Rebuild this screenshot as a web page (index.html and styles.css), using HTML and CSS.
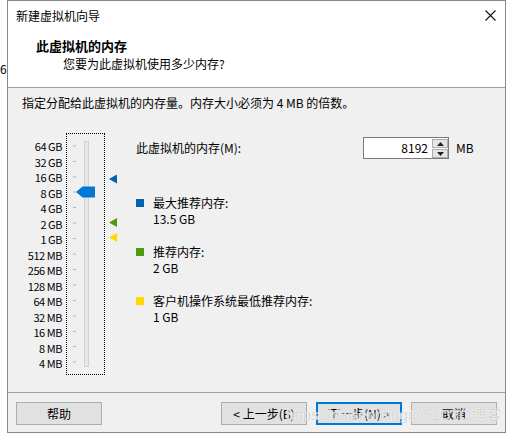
FILE: index.html
```html
<!DOCTYPE html>
<html lang="zh-CN">
<head>
<meta charset="utf-8">
<title>新建虚拟机向导</title>
<link rel="stylesheet" href="styles.css">
</head>
<body>
<div class="stray">6</div>
<div class="window">
  <div class="header">
    <div class="titlebar">
      <span class="title">新建虚拟机向导</span>
      <svg class="close" width="11" height="11" viewBox="0 0 11 11"><path d="M0.5 0.5L10.5 10.5M10.5 0.5L0.5 10.5" stroke="#111" stroke-width="1.1" fill="none"/></svg>
    </div>
    <div class="heading">此虚拟机的内存</div>
    <div class="subheading">您要为此虚拟机使用多少内存?</div>
  </div>
  <div class="body">
    <div class="intro">指定分配给此虚拟机的内存量。内存大小必须为 4 MB 的倍数。</div>
    <div class="main">
      <div class="scale">
        <span>64 GB</span><span>32 GB</span><span>16 GB</span><span>8 GB</span><span>4 GB</span>
        <span>2 GB</span><span>1 GB</span><span>512 MB</span><span>256 MB</span><span>128 MB</span>
        <span>64 MB</span><span>32 MB</span><span>16 MB</span><span>8 MB</span><span>4 MB</span>
      </div>
      <div class="slider">
        <svg width="37" height="240" viewBox="0 0 37 240">
          <g fill="#b4b4b4">
            <rect x="6" y="11.5" width="3" height="1"/>
            <rect x="6" y="27" width="3" height="1"/>
            <rect x="6" y="42.5" width="3" height="1"/>
            <rect x="6" y="57.5" width="3" height="1"/>
            <rect x="6" y="73" width="3" height="1"/>
            <rect x="6" y="88.5" width="3" height="1"/>
            <rect x="6" y="104" width="3" height="1"/>
            <rect x="6" y="119.5" width="3" height="1"/>
            <rect x="6" y="135" width="3" height="1"/>
            <rect x="6" y="150.5" width="3" height="1"/>
            <rect x="6" y="166" width="3" height="1"/>
            <rect x="6" y="181.5" width="3" height="1"/>
            <rect x="6" y="197" width="3" height="1"/>
            <rect x="6" y="212" width="3" height="1"/>
            <rect x="6" y="227.5" width="3" height="1"/>
          </g>
          <rect x="17.5" y="7.5" width="4" height="225" fill="#e7e7e7" stroke="#d2d2d2"/>
          <path d="M9 58 L15.5 52.5 L28 52.5 L28 63.5 L15.5 63.5 Z" fill="#0078d7"/>
        </svg>
      </div>
      <svg class="markers" width="16" height="242" viewBox="0 0 16 242">
        <polygon points="12,41.5 12,50.5 4,46" fill="#0063b1"/>
        <polygon points="12,85 12,94 4,89.5" fill="#4d9a0e"/>
        <polygon points="12,100 12,109 4,104.5" fill="#ffd800"/>
      </svg>
      <div class="details">
        <div class="memrow">
          <span class="memlabel">此虚拟机的内存(M):</span>
          <div class="spin">
            <span class="spinvalue">8192</span>
            <div class="spinbtns">
              <span class="spinbtn"><svg width="7" height="4" viewBox="0 0 7 4"><polygon points="0,4 7,4 3.5,0" fill="#222"/></svg></span>
              <span class="spinbtn"><svg width="7" height="4" viewBox="0 0 7 4"><polygon points="0,0 7,0 3.5,4" fill="#222"/></svg></span>
            </div>
          </div>
          <span class="unit">MB</span>
        </div>
        <div class="legend">
          <div class="item">
            <span class="swatch blue"></span>
            <div class="itemtext"><div>最大推荐内存:</div><div>13.5 GB</div></div>
          </div>
          <div class="item">
            <span class="swatch green"></span>
            <div class="itemtext"><div>推荐内存:</div><div>2 GB</div></div>
          </div>
          <div class="item">
            <span class="swatch yellow"></span>
            <div class="itemtext"><div>客户机操作系统最低推荐内存:</div><div>1 GB</div></div>
          </div>
        </div>
      </div>
    </div>
  </div>
  <div class="footer">
    <button class="btn">帮助</button>
    <div class="navbtns">
      <button class="btn">&lt; 上一步(B)</button>
      <button class="btn primary">下一步(N) &gt;</button>
      <button class="btn">取消</button>
    </div>
    <div class="watermark">https://daisenming@51CTO博客</div>
  </div>
</div>
</body>
</html>
```
FILE: styles.css
```css
html, body {
  margin: 0;
  padding: 0;
  background: #ffffff;
}
body {
  position: relative;
  width: 513px;
  height: 440px;
  overflow: hidden;
  font-family: "Noto Sans CJK SC", "Noto Sans", sans-serif;
  font-size: 12px;
  color: #000;
}
.stray {
  position: absolute;
  left: 0;
  top: 61px;
  font-size: 12px;
  line-height: 16px;
  color: #000;
}
.window {
  margin-left: 7px;
  width: 499px;
  height: 433px;
  box-sizing: border-box;
  border: 1px solid #8a8a8a;
  background: #f0f0f0;
  display: flex;
  flex-direction: column;
  position: relative;
}
.header {
  height: 86px;
  background: #ffffff;
  border-bottom: 1px solid #a0a0a0;
  box-sizing: content-box;
}
.titlebar {
  display: flex;
  align-items: center;
  justify-content: space-between;
  height: 16px;
  margin-top: 7px;
  padding: 0 9px 0 8px;
  line-height: 16px;
}
.close {
  display: block;
  margin-top: -1px;
}
.heading {
  margin-top: 14px;
  padding-left: 28px;
  font-size: 13px;
  font-weight: bold;
  line-height: 16px;
}
.subheading {
  margin-top: 2px;
  padding-left: 55px;
  line-height: 16px;
}
.body {
  height: 304px;
  box-sizing: border-box;
  padding-top: 7px;
}
.intro {
  padding-left: 14px;
  line-height: 16px;
}
.main {
  display: flex;
  align-items: flex-start;
  margin-top: 22px;
  padding-left: 10px;
}
.scale {
  width: 44px;
  height: 242px;
  box-sizing: border-box;
  padding: 6px 0 5px 0;
  display: flex;
  flex-direction: column;
  justify-content: space-between;
  align-items: flex-end;
  font-size: 11px;
  letter-spacing: -0.45px;
  line-height: 14px;
  color: #000;
}
.scale span {
  display: block;
  height: 14px;
}
.slider {
  margin-left: 4px;
  width: 39px;
  height: 242px;
  box-sizing: border-box;
  border: 1px dotted #000;
}
.slider svg {
  display: block;
}
.markers {
  display: block;
  flex: none;
}
.details {
  margin-left: 15px;
  display: flex;
  flex-direction: column;
}
.memrow {
  display: flex;
  align-items: center;
  margin-top: 4px;
  height: 22px;
}
.memlabel {
  width: 227px;
  line-height: 16px;
}
.spin {
  display: flex;
  width: 86px;
  height: 22px;
  box-sizing: border-box;
  border: 1px solid #7a7a7a;
  background: #fff;
}
.spinvalue {
  width: 68px;
  box-sizing: border-box;
  padding-right: 3px;
  text-align: right;
  line-height: 19px;
}
.spinbtns {
  display: flex;
  flex-direction: column;
  gap: 1px;
  padding: 1px 0 0 1px;
}
.spinbtn {
  width: 14px;
  height: 8px;
  border: 1px solid #adadad;
  background: #e5e5e5;
  display: flex;
  align-items: center;
  justify-content: center;
}
.spinbtn svg {
  display: block;
}
.unit {
  margin-left: 7px;
  line-height: 16px;
}
.legend {
  margin-top: 36px;
  display: flex;
  flex-direction: column;
  gap: 17px;
}
.item {
  display: flex;
  align-items: flex-start;
}
.swatch {
  width: 8px;
  height: 8px;
  margin-top: 4px;
  margin-right: 9px;
  flex: none;
}
.swatch.blue { background: #0063b1; }
.swatch.green { background: #4d9a0e; }
.swatch.yellow { background: #ffd800; }
.itemtext {
  line-height: 16px;
}
.footer {
  position: relative;
  flex: 1;
  border-top: 1px solid #a0a0a0;
  display: flex;
  align-items: flex-start;
  justify-content: space-between;
  padding: 9px 8px 0 8px;
}
.navbtns {
  display: flex;
  gap: 9px;
}
.btn {
  width: 86px;
  height: 23px;
  margin: 0;
  padding: 0;
  box-sizing: border-box;
  border: 1px solid #adadad;
  background: #e1e1e1;
  font-family: "Noto Sans CJK SC", "Noto Sans", sans-serif;
  font-size: 12px;
  line-height: 19px;
  color: #000;
  text-align: center;
}
.btn.primary {
  border: 2px solid #0078d7;
  line-height: 17px;
}
.watermark {
  position: absolute;
  left: 278px;
  top: 13px;
  font-family: "Liberation Sans", "Noto Sans CJK SC", sans-serif;
  font-size: 15px;
  line-height: 18px;
  color: rgba(170, 170, 170, 0.5);
  text-shadow: 0 0 1px #fff, 0 0 1px #fff;
  white-space: nowrap;
  pointer-events: none;
}
```
